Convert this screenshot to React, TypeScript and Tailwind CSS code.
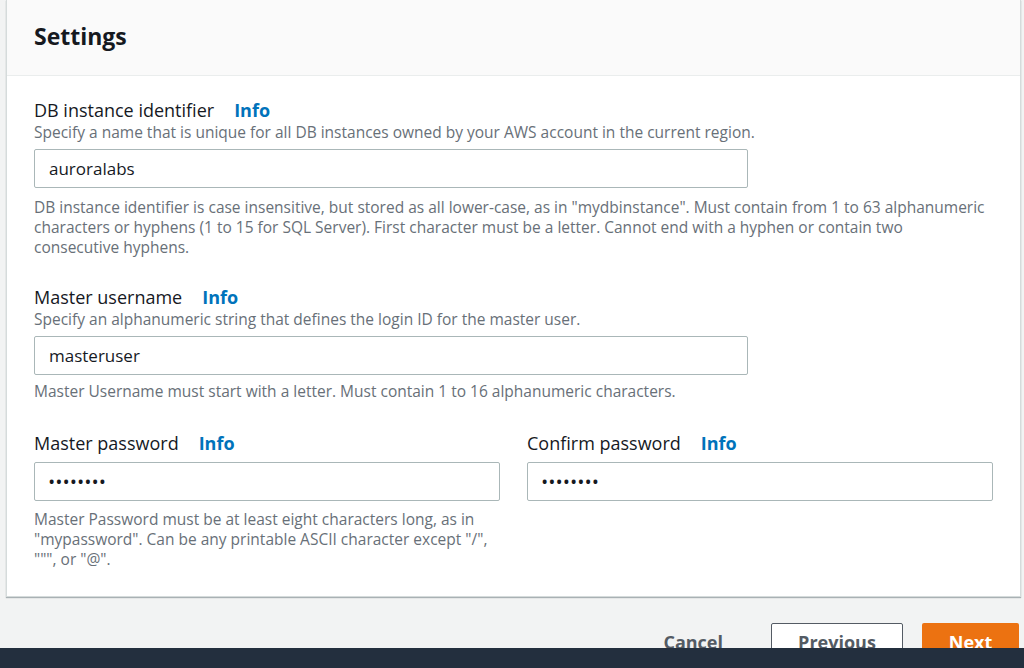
import React from "react";

const font = { fontFamily: '"Open Sans", "Noto Sans", Arial, sans-serif' };

type FieldProps = {
  label: string;
  description?: string;
  value: string;
  secret?: boolean;
  inputGap?: string;
  inputWidth?: string;
};

// label + optional description + fake input box
const Field = ({ label, description, value, secret, inputGap, inputWidth }: FieldProps) => {
  return (
    <div className="flex flex-col">
      <div className="flex items-center h-[22px] text-[18px] text-[#16191f]">
        <span>{label}</span>
        <span className="ml-[20px] font-bold text-[#0073bb]">Info</span>
      </div>
      {description && (
        <p className="mt-[1px] text-[15.5px] leading-[20px] text-[#687078] whitespace-nowrap">
          {description}
        </p>
      )}
      <div
        className={`${inputGap ?? "mt-[7px]"} ${inputWidth ?? "w-full"} h-[39px] border border-[#aab7b8] rounded-[2px] bg-white flex items-center pl-[14px] text-[#16191f] ${
          secret ? "text-[14px] tracking-[2px] font-bold" : "text-[17px]"
        }`}
      >
        {value}
      </div>
    </div>
  );
};

const Hint = ({ className, children }: { className?: string; children: React.ReactNode }) => (
  <p className={`text-[15.5px] leading-[20px] text-[#687078] ${className ?? ""}`}>{children}</p>
);

const App = () => {
  return (
    <div
      className="relative h-[668px] w-[1024px] overflow-hidden bg-[#f2f3f3]"
      style={font}
    >
      {/* Settings card */}
      <section className="ml-[6px] w-[1015px] bg-white border-x border-b border-[#d5dbdb] shadow-[0_1px_1px_rgba(0,28,36,0.3)]">
        <header className="h-[76px] bg-[#fafafa] border-b border-[#eaeded] flex items-center pl-[27px] pb-[2px]">
          <h2 className="text-[23px] font-bold text-[#16191f]">Settings</h2>
        </header>

        <div className="pl-[27px] pr-[27px] pt-[23px] pb-[27px] flex flex-col">
          <Field
            label="DB instance identifier"
            description="Specify a name that is unique for all DB instances owned by your AWS account in the current region."
            value="auroralabs"
            inputWidth="w-[714px]"
          />
          <Hint className="mt-[9px] w-[955px]">
            DB instance identifier is case insensitive, but stored as all
            lower-case, as in "mydbinstance". Must contain from 1 to 63
            alphanumeric characters or hyphens (1 to 15 for SQL Server). First
            character must be a letter. Cannot end with a hyphen or contain two
            consecutive hyphens.
          </Hint>

          <div className="mt-[29px]">
            <Field
              label="Master username"
              description="Specify an alphanumeric string that defines the login ID for the master user."
              value="masteruser"
              inputWidth="w-[714px]"
            />
          </div>
          <Hint className="mt-[6px]">
            Master Username must start with a letter. Must contain 1 to 16
            alphanumeric characters.
          </Hint>

          <div className="mt-[31px] grid grid-cols-[466px_466px] gap-x-[27px]">
            <div className="flex flex-col">
              <Field label="Master password" value="••••••••" secret inputGap="mt-[8px]" />
              <Hint className="mt-[8px]">
                Master Password must be at least eight characters long, as in
                "mypassword". Can be any printable ASCII character except "/",
                """, or "@".
              </Hint>
            </div>
            <Field label="Confirm password" value="••••••••" secret inputGap="mt-[8px]" />
          </div>
        </div>
      </section>

      {/* Wizard actions */}
      <div className="flex justify-end items-start mt-[26px] pr-[5px]">
        <button className="h-[38px] px-[20px] text-[18px] font-bold text-[#545b64] mr-[28px]">
          Cancel
        </button>
        <button className="h-[38px] w-[132px] border border-[#545b64] rounded-[2px] bg-white text-[18px] font-bold text-[#545b64]">
          Previous
        </button>
        <button className="ml-[19px] h-[38px] w-[97px] rounded-[2px] bg-[#ec7211] text-[18px] font-bold text-white">
          Next
        </button>
      </div>

      {/* Console footer bar */}
      <div className="absolute left-0 right-0 bottom-0 h-[20px] bg-[#232f3e]" />
    </div>
  );
};

export default App;
